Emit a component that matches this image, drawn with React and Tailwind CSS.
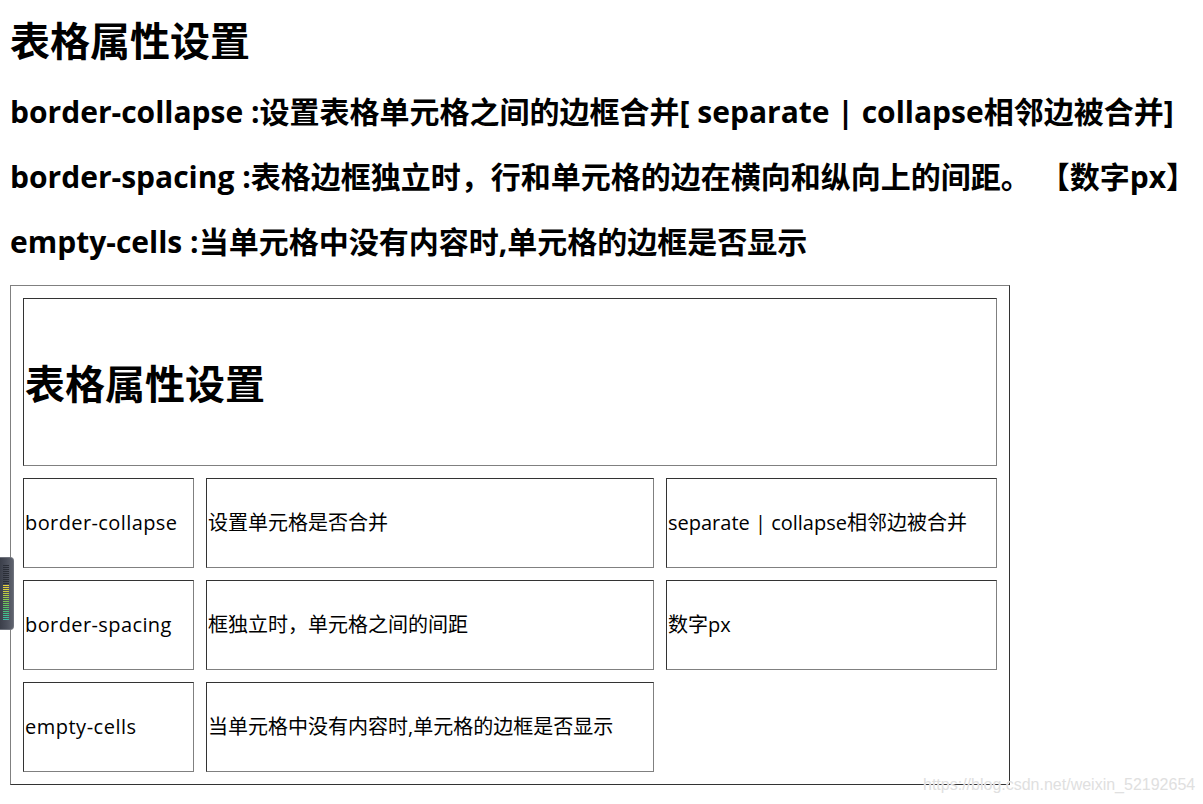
import React from "react";

const FONT = "font-['Open_Sans','Noto_Sans_CJK_SC',sans-serif]";

const BAR_CLASSES = [
  "bg-[#2a2e37]", "bg-[#2a2e37]", "bg-[#2a2e37]", "bg-[#2a2e37]", "bg-[#2a2e37]",
  "bg-[#2a2e37]", "bg-[#2a2e37]", "bg-[#2a2e37]", "bg-[#2a2e37]", "bg-[#2a2e37]",
  "bg-[#e6d03a]", "bg-[#e0d03a]", "bg-[#d6cf3c]", "bg-[#c8cd3e]", "bg-[#b8cb42]",
  "bg-[#a8ca46]", "bg-[#98c94a]", "bg-[#88c84e]", "bg-[#7ac653]", "bg-[#6ec559]",
  "bg-[#62c460]", "bg-[#58c368]", "bg-[#4ec272]", "bg-[#48c17c]", "bg-[#44c086]",
  "bg-[#40bf90]", "bg-[#3ebe9a]", "bg-[#3cbda4]",
];

function Meter() {
  return (
    <div className="w-[14px] h-[73px] rounded-r-[4px] border border-l-0 border-[#6f737d] bg-gradient-to-r from-[#3b3f4a] via-[#4a4e5a] to-[#5e626d] pt-[7px] pl-[3px]">
      <div className="flex flex-col gap-[1px]">
        {BAR_CLASSES.map((c, i) => (
          <div key={i} className={"w-[6px] h-[1px] " + c} />
        ))}
      </div>
    </div>
  );
}

function Cell({ children, className = "" }) {
  return (
    <div
      className={
        "flex items-center border border-t-[#333333] border-l-[#333333] border-b-[#808080] border-r-[#808080] pl-[1px] text-[20px] leading-[28px] text-black whitespace-nowrap " +
        className
      }
    >
      {children}
    </div>
  );
}

export default function App() {
  return (
    <div className={"relative w-[1203px] h-[804px] overflow-hidden bg-white text-black " + FONT}>
      <div className="flex flex-col pl-[10px]">
        <h1 className="mt-[15px] text-[40px] leading-[52px] font-bold whitespace-nowrap">表格属性设置</h1>
        <h2 className="mt-[25px] text-[30px] leading-[40px] font-bold whitespace-nowrap">
          border-collapse :设置表格单元格之间的边框合并[ separate | collapse相邻边被合并]
        </h2>
        <h2 className="mt-[25px] text-[30px] leading-[40px] font-bold whitespace-nowrap">
          border-spacing :表格边框独立时，行和单元格的边在横向和纵向上的间距。
          <span className="ml-[24px]">【数字px】</span>
        </h2>
        <h2 className="mt-[25px] text-[30px] leading-[40px] font-bold whitespace-nowrap">
          empty-cells :当单元格中没有内容时,单元格的边框是否显示
        </h2>

        <div className="mt-[23px] w-[1000px] h-[500px] border border-t-[#808080] border-l-[#808080] border-b-[#333333] border-r-[#333333] p-[12px]">
          <div className="grid grid-cols-[171px_448px_331px] grid-rows-[168px_90px_90px_90px] gap-[12px]">
            <Cell className="col-span-3 pt-[4px]">
              <span className="text-[40px] leading-[52px] font-bold">表格属性设置</span>
            </Cell>
            <Cell className="tracking-[0.4px]">border-collapse</Cell>
            <Cell>设置单元格是否合并</Cell>
            <Cell>separate | collapse相邻边被合并</Cell>
            <Cell className="tracking-[0.4px]">border-spacing</Cell>
            <Cell>框独立时，单元格之间的间距</Cell>
            <Cell>数字px</Cell>
            <Cell className="tracking-[0.5px]">empty-cells</Cell>
            <Cell>当单元格中没有内容时,单元格的边框是否显示</Cell>
            <div />
          </div>
        </div>
      </div>

      <div className="absolute left-0 top-[557px]">
        <Meter />
      </div>

      <div className="absolute left-[923px] top-[775px] font-['Liberation_Sans',sans-serif] text-[16px] leading-[20px] text-[#e0e0e0] whitespace-nowrap [text-shadow:0_0_1px_#ffffff]">
        https://blog.csdn.net/weixin_52192654
      </div>
    </div>
  );
}
